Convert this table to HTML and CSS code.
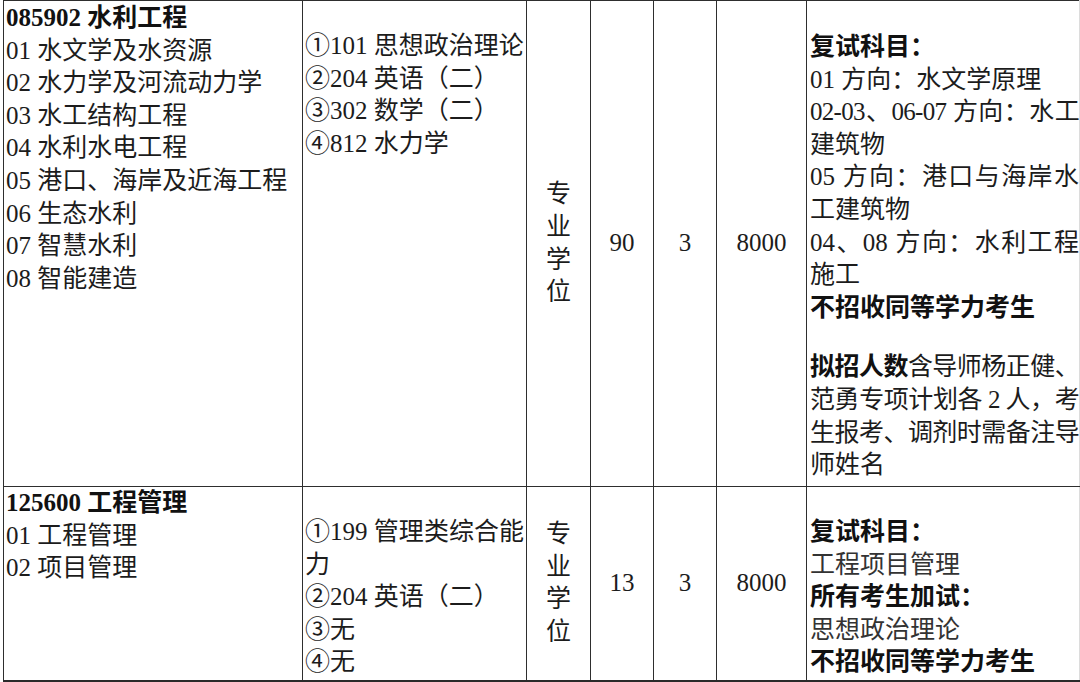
FILE: index.html
```html
<!DOCTYPE html>
<html lang="zh-CN">
<head>
<meta charset="utf-8">
<title>招生目录</title>
<link rel="stylesheet" href="styles.css">
</head>
<body>
<table class="catalog">
  <colgroup>
    <col class="c-major">
    <col class="c-exam">
    <col class="c-type">
    <col class="c-num">
    <col class="c-year">
    <col class="c-fee">
    <col class="c-note">
  </colgroup>
  <tr class="row1">
    <td class="major">
      <div class="b">085902 水利工程</div>
      <div>01 水文学及水资源</div>
      <div>02 水力学及河流动力学</div>
      <div>03 水工结构工程</div>
      <div>04 水利水电工程</div>
      <div>05 港口、海岸及近海工程</div>
      <div>06 生态水利</div>
      <div>07 智慧水利</div>
      <div>08 智能建造</div>
    </td>
    <td class="exam">
      <div>①101 思想政治理论</div>
      <div>②204 英语（二）</div>
      <div>③302 数学（二）</div>
      <div>④812 水力学</div>
    </td>
    <td class="mid type">专<br>业<br>学<br>位</td>
    <td class="mid">90</td>
    <td class="mid">3</td>
    <td class="mid">8000</td>
    <td class="note">
      <div class="b">复试科目：</div>
      <div>01 方向：水文学原理</div>
      <div class="j t">02-03、06-07 方向：水工</div>
      <div>建筑物</div>
      <div class="j">05 方向：港口与海岸水</div>
      <div>工建筑物</div>
      <div class="j">04、08 方向：水利工程</div>
      <div>施工</div>
      <div class="b">不招收同等学力考生</div>
      <div class="gap"></div>
      <div class="j t"><span class="b">拟招人数</span>含导师杨正健、</div>
      <div class="j t">范勇专项计划各 2 人，考</div>
      <div class="j t">生报考、调剂时需备注导</div>
      <div>师姓名</div>
    </td>
  </tr>
  <tr class="row2">
    <td class="major">
      <div class="b">125600 工程管理</div>
      <div>01 工程管理</div>
      <div>02 项目管理</div>
    </td>
    <td class="exam">
      <div class="j">①199 管理类综合能</div>
      <div>力</div>
      <div>②204 英语（二）</div>
      <div>③无</div>
      <div>④无</div>
    </td>
    <td class="mid type">专<br>业<br>学<br>位</td>
    <td class="mid">13</td>
    <td class="mid">3</td>
    <td class="mid">8000</td>
    <td class="note">
      <div class="b">复试科目：</div>
      <div class="soft">工程项目管理</div>
      <div class="b">所有考生加试：</div>
      <div class="soft">思想政治理论</div>
      <div class="b">不招收同等学力考生</div>
    </td>
  </tr>
</table>
</body>
</html>
```

FILE: styles.css
```css
html, body {
  margin: 0;
  padding: 0;
  background: #ffffff;
}

body {
  width: 1080px;
  height: 682px;
  overflow: hidden;
  font-family: "Liberation Serif", "Noto Sans CJK SC", serif;
  font-size: 25px;
  line-height: 32.6px;
  color: #1c1c1c;
}

.catalog {
  margin-left: 3px;
  border-collapse: collapse;
  table-layout: fixed;
  width: 1076px;
}

.c-major { width: 299px; }
.c-exam  { width: 224px; }
.c-type  { width: 64px; }
.c-num   { width: 63px; }
.c-year  { width: 63px; }
.c-fee   { width: 90px; }
.c-note  { width: 273px; }

.catalog td {
  border: 1.5px solid #2e2e2e;
  padding: 0 2px 0 2px;
  vertical-align: top;
  white-space: nowrap;
  overflow: visible;
}

.catalog tr:first-child td {
  border-top-width: 1px;
}

.catalog td:last-child {
  border-right: 1px solid #dcdcdc;
}

.catalog tr:last-child td {
  border-bottom: 2px solid #2a2a2a;
}

.row1 { height: 486px; }
.row2 { height: 194px; }

.row1 .major { padding-top: 1px; }
.row2 .major { padding-top: 0; }

.exam { padding-top: 29px !important; }
.note { padding-top: 30px !important; padding-left: 3px !important; padding-right: 0 !important; }
.row2 .exam, .row2 .note { padding-top: 29px !important; }

.mid {
  vertical-align: middle !important;
  text-align: center;
}

.b {
  font-weight: bold;
  color: #111111;
}

.j {
  text-align: justify;
  text-align-last: justify;
}

.t {
  letter-spacing: -0.7px;
}

.gap {
  height: 27px;
}

.soft {
  color: #333333;
}
```
